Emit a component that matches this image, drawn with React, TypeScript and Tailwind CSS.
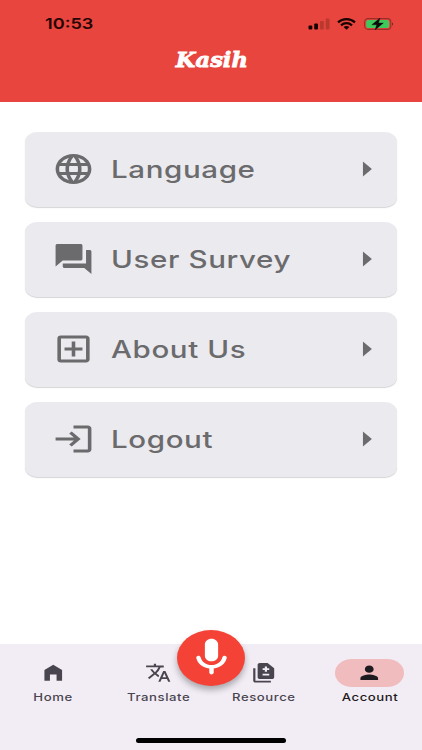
import type { ReactNode } from "react";
import type { IconType } from "react-icons";
import {
  MdArrowRight,
  MdDifference,
  MdForum,
  MdLanguage,
  MdLogin,
  MdOutlineAddBox,
  MdPerson,
  MdTranslate,
} from "react-icons/md";

const menuItems: { label: string; icon: IconType }[] = [
  { label: "Language", icon: MdLanguage },
  { label: "User Survey", icon: MdForum },
  { label: "About Us", icon: MdOutlineAddBox },
  { label: "Logout", icon: MdLogin },
];

function StatusBar() {
  return (
    <div className="flex h-[47px] items-center justify-between pl-[45px] pr-7">
      <span className="origin-left scale-x-[1.21] text-[15px] font-semibold leading-none text-[#260404]">10:53</span>
      <div className="flex items-center">
        <svg className="h-3 w-[22px]" viewBox="0 0 22 12">
          <rect x="0.5" y="7.5" width="3.8" height="4" rx="1" fill="#180303" />
          <rect x="6.2" y="5.5" width="3.8" height="6" rx="1" fill="#180303" />
          <rect x="12" y="3" width="3.8" height="8.5" rx="1" fill="#b9382f" />
          <rect x="17.7" y="0.5" width="3.8" height="11" rx="1" fill="#b9382f" />
        </svg>
        <svg className="ml-[7px] h-3 w-[19px]" viewBox="0 0 19 12" fill="none" stroke="#180303" strokeWidth="2.2">
          <path d="M1 4.4C5.6.1 13.4.1 18 4.4" />
          <path d="M4 7.3c3.2-2.8 7.8-2.8 11 0" />
          <path d="M6.6 9.1c1.8-1.4 4-1.4 5.8 0L9.5 11.8z" fill="#180303" stroke="none" />
        </svg>
        <svg className="ml-2 h-3 w-[30px]" viewBox="0 0 30 12">
          <rect x="0.6" y="0.6" width="26.2" height="10.8" rx="3.4" fill="none" stroke="#9b2d28" strokeWidth="1.1" />
          <rect x="2.2" y="2" width="23" height="8" rx="2" fill="#3fc95c" />
          <path d="M28 4.2c1.4.6 1.4 3 0 3.6z" fill="#7d2520" />
          <path d="M16 0 7.8 6.8h4.9L11 12l8.4-7h-4.8z" fill="#0b0b0b" stroke="#0b0b0b" strokeWidth="0.3" />
        </svg>
      </div>
    </div>
  );
}

function MenuCard({ label, icon: Icon }: { label: string; icon: IconType }) {
  return (
    <button className="flex h-[75px] w-full items-center rounded-[12px/10px] bg-[#ebeaef] pb-px pl-[27px] pr-[9px] text-[#6b6b6d] shadow-[0_1px_1px_rgba(0,0,0,0.17)]">
      <Icon className="h-9 w-[43px] shrink-0" preserveAspectRatio="none" />
      <span className="ml-4 mt-px origin-left scale-x-[1.23] whitespace-nowrap text-2xl font-[470] leading-none tracking-[0.5px]">
        {label}
      </span>
      <MdArrowRight className="ml-auto h-9 w-[43px] shrink-0" preserveAspectRatio="none" />
    </button>
  );
}

function NavItem({ label, active, children }: { label: string; active?: boolean; children: ReactNode }) {
  return (
    <div className={active ? "flex flex-1 flex-col items-center text-[#1d1b20]" : "flex flex-1 flex-col items-center text-[#49454f]"}>
      <div className={active ? "flex h-7 w-[69px] items-center justify-center rounded-[17px/14px] bg-[#f0bcbe]" : "flex h-7 items-center justify-center"}>
        {children}
      </div>
      <span className="ml-px mt-[5px] scale-x-[1.23] text-[10.7px] font-medium leading-[11px] tracking-[0.45px]">{label}</span>
    </div>
  );
}

export default function App() {
  return (
    <div className="flex h-[750px] w-[422px] flex-col overflow-hidden bg-white font-['Inter',sans-serif]">
      <header className="h-[102px] bg-[#e8453e]">
        <StatusBar />
        <h1 className="pl-px text-center font-['DejaVu_Serif',serif] text-[20px] font-bold italic leading-[26px] text-white">
          <span className="inline-block scale-x-[1.13] [-webkit-text-stroke:0.8px_white]">Kasih</span>
        </h1>
      </header>

      <main className="flex flex-1 flex-col gap-[15px] px-[25px] pt-[30px]">
        {menuItems.map((item) => (
          <MenuCard key={item.label} {...item} />
        ))}
      </main>

      <nav className="relative h-[106px] bg-[#f2edf5] pt-[15px]">
        <div className="flex">
          <NavItem label="Home">
            <svg className="h-[21.5px] w-[26.5px]" viewBox="0 0 24 24" preserveAspectRatio="none" fill="currentColor">
              <path d="M12 3 4 9v12h5v-7h6v7h5V9z" />
            </svg>
          </NavItem>
          <NavItem label="Translate">
            <MdTranslate className="h-[21.5px] w-[26.5px]" preserveAspectRatio="none" />
          </NavItem>
          <NavItem label="Resource">
            <MdDifference className="h-[21.5px] w-[26.5px]" preserveAspectRatio="none" />
          </NavItem>
          <NavItem label="Account" active>
            <MdPerson className="h-[21.5px] w-[26.5px]" preserveAspectRatio="none" />
          </NavItem>
        </div>

        <button className="absolute -top-[14px] left-[177px] flex h-14 w-[68px] items-center justify-center rounded-[50%] bg-[#f44336] pb-px text-white shadow-[0_4px_6px_rgba(0,0,0,0.3)]">
          <svg className="h-[45px] w-[53px]" viewBox="0 0 24 24" preserveAspectRatio="none" fill="currentColor">
            <path d="M12 14c1.66 0 3-1.34 3-3V5c0-1.66-1.34-3-3-3S9 3.34 9 5v6c0 1.66 1.34 3 3 3zm5.91-3c-.49 0-.9.36-.98.85C16.52 14.2 14.47 16 12 16s-4.52-1.8-4.93-4.15c-.08-.49-.49-.85-.98-.85-.61 0-1.09.54-1 1.14.49 3 2.89 5.35 5.91 5.78V20c0 .55.45 1 1 1s1-.45 1-1v-2.08c3.02-.43 5.42-2.78 5.91-5.78.1-.6-.39-1.14-1-1.14z" />
          </svg>
        </button>
        <div className="absolute bottom-[7.5px] left-[136px] h-[4.5px] w-[150px] rounded-full bg-black" />
      </nav>
    </div>
  );
}
